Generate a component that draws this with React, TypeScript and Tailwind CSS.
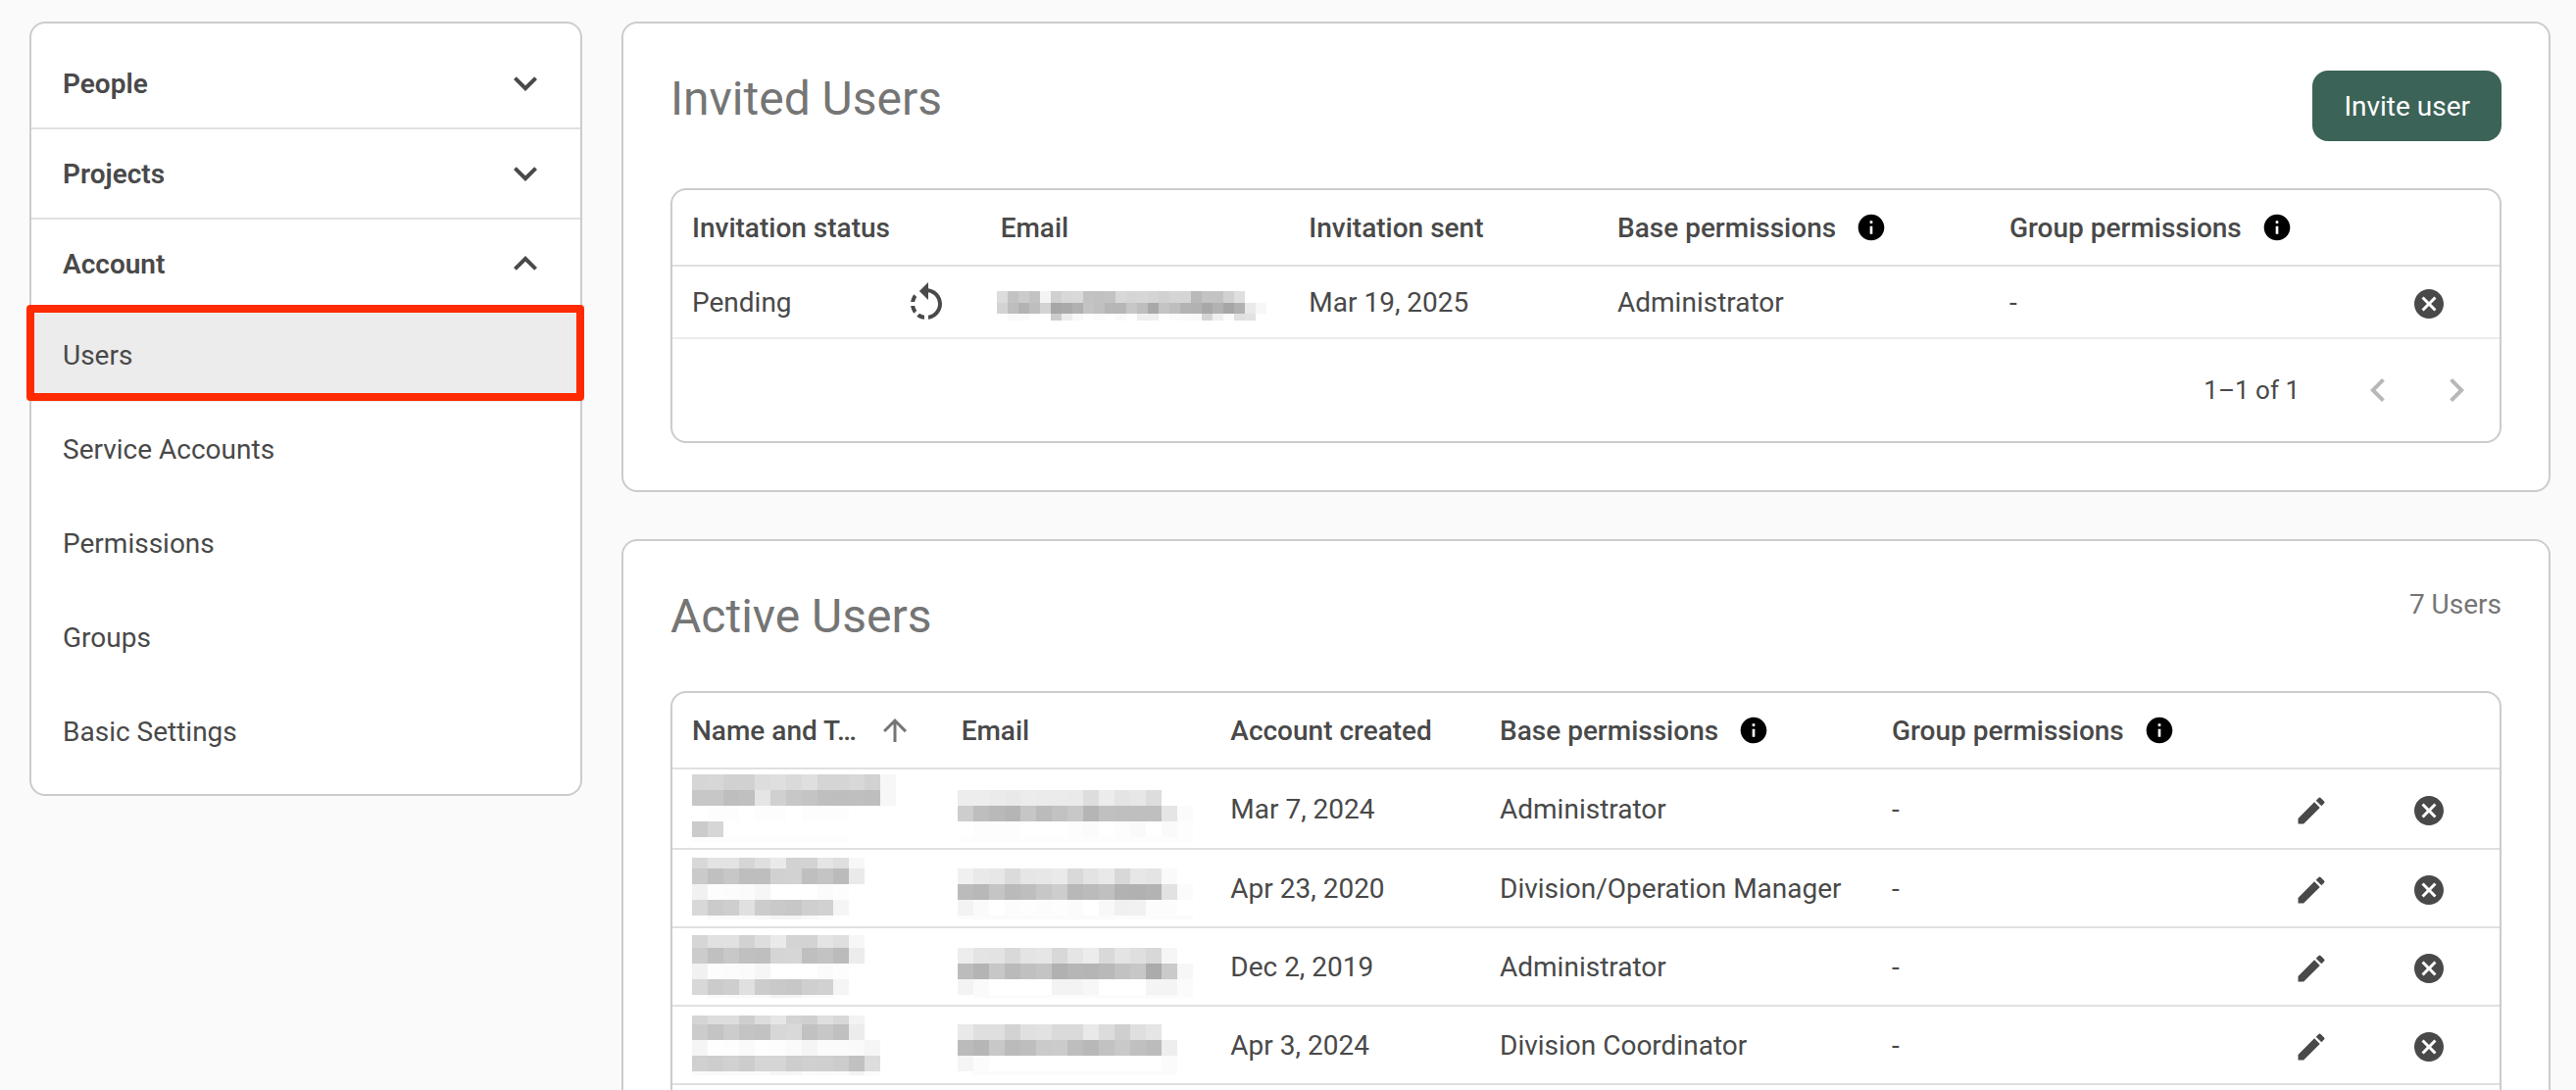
import React, { useState } from "react";
import {
  MdArrowUpward,
  MdCancel,
  MdEdit,
  MdExpandLess,
  MdExpandMore,
  MdInfo,
  MdKeyboardArrowLeft,
  MdKeyboardArrowRight,
  MdRotateLeft,
} from "react-icons/md";

const sections = ["People", "Projects", "Account"];
const accountLinks = ["Users", "Service Accounts", "Permissions", "Groups", "Basic Settings"];

// Grey levels of a masked value, one string per line of blocks. "--" leaves a block empty.
const invitedEmail = [
  "dc c3 cb c2 f4 d0 d8 d9 c2 c1 c3 d8 d5 d7 d4 d1 d5 d5 b9 c3 c3 d1 df",
  "d3 be b3 be d3 a7 a9 b0 c4 c0 b6 b6 c7 be a8 c4 be b3 b2 a8 b2 a6 b1 e9 f7",
  "-- fa fa -- -- cc ec f8 -- fb -- fa -- ef ef -- fb fa f9 d5 ef fb e0 e2",
];

const activeUsers = [
  {
    id: 1,
    heights: [16, 16, 16, 16, 6],
    name: [
      "d6 d7 d1 d1 dd df da df d5 d5 d8 d2 f7",
      "c7 c7 be c0 e5 d0 c7 c4 bf be bf be f7",
      "-- fd fd -- fd fd -- fd fd fd",
      "cb d6",
      "fd fd fd fd fd fd fd fd fd fd",
    ],
    email: [
      "--",
      "ed ed eb e9 ec eb eb ea dd ec e4 e7 dd",
      "cd be b9 b5 c6 bb c2 c8 b5 c0 bf bf bf e5 fb",
      "-- fd fd fd -- -- -- fd fb -- fd fa -- fa fd",
      "fd fd fd fd fd fd fd fd fd fd fd fd fd fd fd",
    ],
    created: "Mar 7, 2024",
    base: "Administrator",
    group: "-",
  },
  {
    id: 2,
    heights: [11, 16, 16, 16, 4],
    name: [
      "d8 e3 e3 d5 df ea d2 d3 e5 df f7",
      "ca c0 c7 be be d1 d2 bf c4 bb ea",
      "f1 fd fc fb f6 -- -- -- fb fd",
      "d8 cb ce e0 cc c9 c7 cf d1 f5",
      "-- fa fa fa f8 f4 f4 f8 fb",
    ],
    email: [
      "--",
      "f0 e9 e7 db e6 e7 ea d9 e3 e9 d8 e7 e4 fa",
      "bb b8 c5 ba be c7 cd b8 bb c0 b2 b1 b3 e2 fb",
      "f3 fa -- fc fd fc fd fb -- f8 f0 f1 fc fc",
      "fc fb fb fb fb fb fb fb fb fb fc fc fb fb fb",
    ],
    created: "Apr 23, 2020",
    base: "Division/Operation Manager",
    group: "-",
  },
  {
    id: 3,
    heights: [13, 16, 16, 16, 3],
    name: [
      "d6 e1 e1 d2 de ea d4 d3 e4 df f7",
      "cc c0 c8 c0 bf d5 d6 bf c3 bb ec",
      "f1 fd fc fb f6 -- -- -- fb fd",
      "d8 cb ce e0 cc c9 c7 cf d1 f5",
      "-- fa fa fa fa f4 f4 fa fb",
    ],
    email: [
      "--",
      "ed e4 e3 d9 e4 e6 d8 e5 ec d9 e4 df d8 f6",
      "bc b4 c7 ba c0 c4 b1 b6 b5 b9 c2 c7 ab ca f7",
      "f3 fa -- -- -- -- f3 f3 f7 -- -- -- f4 f4 fb",
      "-- fb fb fb fb fb fc fc fb fb fb fb fb fb fc",
    ],
    created: "Dec 2, 2019",
    base: "Administrator",
    group: "-",
  },
  {
    id: 4,
    heights: [9, 16, 16, 16, 4],
    name: [
      "d5 dd dd ce dd e6 d3 cf df d8 f3",
      "cc c4 cc c4 c2 d7 d9 c1 c7 c0 ec",
      "f5 fe fd fa fe fd fa f5 fb fb fa f6",
      "d0 cd d1 cc d5 d5 cd d0 cf cc c1 dd",
      "fa f9 fa fa fb f6 f6 fb fa fb f3 fb",
    ],
    email: [
      "--",
      "e9 df df d3 e0 e2 da da e9 dc cf df e5",
      "bb b6 c8 bb be ca cb be b8 c2 c9 c0 bc ee",
      "f5 fc -- -- -- -- -- -- -- -- -- -- -- fb",
      "-- fb fb fb fb fb fb fb fb fb fb fb fb fb",
    ],
    created: "Apr 3, 2024",
    base: "Division Coordinator",
    group: "-",
  },
];

type MaskedProps = {
  label: string;
  lines: string[];
  heights: number[];
  size: number;
};

const Masked = ({ label, lines, heights, size }: MaskedProps) => {
  const width = Math.max(...lines.map((line) => line.split(" ").length)) * size;
  const height = heights.reduce((sum, h) => sum + h, 0);

  return (
    <svg role="img" aria-label={label} width={width} height={height} shapeRendering="crispEdges" className="block max-w-none">
      {lines.map((line, row) =>
        line.split(" ").map((grey, col) =>
          grey === "--" ? null : (
            <rect
              key={`${row}-${col}`}
              x={col * size}
              y={heights.slice(0, row).reduce((sum, h) => sum + h, 0)}
              width={size}
              height={heights[row]}
              fill={`#${grey}${grey}${grey}`}
            />
          )
        )
      )}
    </svg>
  );
};

const Sidebar = () => {
  const [open, setOpen] = useState("Account");
  const [current, setCurrent] = useState("Users");

  return (
    <nav className="w-[564px] shrink-0 rounded-2xl border-2 border-[#cccccc] bg-white py-4">
      {sections.map((section) => (
        <div key={section} className="border-b-2 border-[#e0e0e0] last:border-b-0">
          <button
            type="button"
            aria-expanded={open === section}
            onClick={() => setOpen(open === section ? "" : section)}
            className="flex h-[90px] w-full items-center justify-between px-8 font-semibold"
          >
            {section}
            {open === section ? <MdExpandLess className="size-12" /> : <MdExpandMore className="size-12" />}
          </button>
          {section === "Account" && open === "Account" && (
            <ul>
              {accountLinks.map((link) => (
                <li key={link} className="relative">
                  <a
                    href="#"
                    onClick={() => setCurrent(link)}
                    className={`flex h-24 items-center px-8 ${current === link ? "bg-[#ececec]" : ""}`}
                  >
                    {link}
                  </a>
                  {current === link && (
                    <span className="pointer-events-none absolute -top-[3px] -right-1 bottom-px -left-[5px] rounded-sm border-8 border-[#ff2a00]" />
                  )}
                </li>
              ))}
            </ul>
          )}
        </div>
      ))}
    </nav>
  );
};

const HeadCell = ({ children }: { children?: React.ReactNode }) => (
  <th scope="col" className="h-[78px] border-b-2 border-[#e0e0e0] px-5 text-left font-medium">
    <div className="flex items-center gap-5 whitespace-nowrap">{children}</div>
  </th>
);

const InfoButton = ({ label }: { label: string }) => (
  <button type="button" aria-label={label}>
    <MdInfo className="size-8 text-black" />
  </button>
);

const RemoveButton = () => (
  <button type="button" aria-label="Remove" className="block p-[10px]">
    <MdCancel className="size-9" />
  </button>
);

const InvitedUsers = () => (
  <section className="rounded-2xl border-2 border-[#cccccc] bg-white p-12">
    <div className="flex items-start justify-between">
      <h2 className="text-5xl leading-[57px] text-[#757575]">Invited Users</h2>
      <button type="button" className="h-[72px] rounded-2xl bg-[#3b6357] px-8 text-white">
        Invite user
      </button>
    </div>

    <div className="mt-12 rounded-2xl border-2 border-[#cccccc]">
      <table className="w-full table-fixed border-separate border-spacing-0">
        <colgroup>
          <col />
          <col />
          <col />
          <col className="w-[400px]" />
          <col className="w-[400px]" />
          <col className="w-[120px]" />
        </colgroup>
        <thead>
          <tr>
            <HeadCell>Invitation status</HeadCell>
            <HeadCell>Email</HeadCell>
            <HeadCell>Invitation sent</HeadCell>
            <HeadCell>
              Base permissions <InfoButton label="About base permissions" />
            </HeadCell>
            <HeadCell>
              Group permissions <InfoButton label="About group permissions" />
            </HeadCell>
            <HeadCell />
          </tr>
        </thead>
        <tbody>
          <tr className="h-[74px] *:border-b-2 *:border-[#ececec] *:px-5">
            <td>
              <div className="flex items-center justify-between">
                Pending
                <button type="button" aria-label="Resend invitation" className="px-3 pt-1">
                  <MdRotateLeft className="size-12" />
                </button>
              </div>
            </td>
            <td className="pt-2 pl-4!">
              <Masked label="Hidden email" lines={invitedEmail} heights={[12, 11, 7]} size={11} />
            </td>
            <td>Mar 19, 2025</td>
            <td>Administrator</td>
            <td>-</td>
            <td className="pt-1">
              <RemoveButton />
            </td>
          </tr>
        </tbody>
      </table>
      <div className="flex h-[104px] items-center justify-end pr-1">
        <span className="mr-10 text-[26px]">1–1 of 1</span>
        <button type="button" disabled aria-label="Previous page" className="p-4 text-[#b8b8b8]">
          <MdKeyboardArrowLeft className="size-12" />
        </button>
        <button type="button" disabled aria-label="Next page" className="p-4 text-[#b8b8b8]">
          <MdKeyboardArrowRight className="size-12" />
        </button>
      </div>
    </div>
  </section>
);

const ActiveUsers = () => (
  <section className="rounded-2xl border-2 border-[#cccccc] bg-white p-12">
    <div className="flex items-start justify-between text-[#757575]">
      <h2 className="text-5xl leading-[57px]">Active Users</h2>
      <span>7 Users</span>
    </div>

    <div className="mt-12 rounded-2xl border-2 border-[#cccccc] pb-24">
      <table className="w-full table-fixed border-separate border-spacing-0">
        <colgroup>
          <col />
          <col />
          <col />
          <col className="w-[400px]" />
          <col className="w-[400px]" />
          <col className="w-[120px]" />
          <col className="w-[120px]" />
        </colgroup>
        <thead>
          <tr>
            <th scope="col" aria-sort="ascending" className="h-[78px] border-b-2 border-[#e0e0e0] px-5 text-left font-medium">
              <div className="flex items-center justify-between whitespace-nowrap">
                Name and T…
                <button type="button" aria-label="Sort" className="p-[10px]">
                  <MdArrowUpward className="size-9 text-[#757575]" />
                </button>
              </div>
            </th>
            <HeadCell>Email</HeadCell>
            <HeadCell>Account created</HeadCell>
            <HeadCell>
              Base permissions <InfoButton label="About base permissions" />
            </HeadCell>
            <HeadCell>
              Group permissions <InfoButton label="About group permissions" />
            </HeadCell>
            <HeadCell />
            <HeadCell />
          </tr>
        </thead>
        <tbody>
          {activeUsers.map((user) => (
            <tr key={user.id} className="h-20 whitespace-nowrap *:border-b-2 *:border-[#e0e0e0] *:px-5 first:h-[82px]">
              <td>
                <Masked label="Hidden name" lines={user.name} heights={user.heights} size={16} />
              </td>
              <td className="pl-4!">
                <Masked label="Hidden email" lines={user.email} heights={user.heights} size={16} />
              </td>
              <td>{user.created}</td>
              <td>{user.base}</td>
              <td>{user.group}</td>
              <td className="pt-1">
                <button type="button" aria-label="Edit" className="block p-[10px]">
                  <MdEdit className="size-9" />
                </button>
              </td>
              <td className="pt-1">
                <RemoveButton />
              </td>
            </tr>
          ))}
        </tbody>
      </table>
    </div>
  </section>
);

const App = () => (
  <div className="flex h-screen items-start gap-10 overflow-hidden bg-[#fafafa] pt-[22px] pr-[26px] pl-[30px] font-[Roboto,sans-serif] text-[28px] leading-[33px] text-[#494949]">
    <Sidebar />
    <main className="flex min-w-0 flex-1 flex-col gap-12">
      <InvitedUsers />
      <ActiveUsers />
    </main>
  </div>
);

export default App;
